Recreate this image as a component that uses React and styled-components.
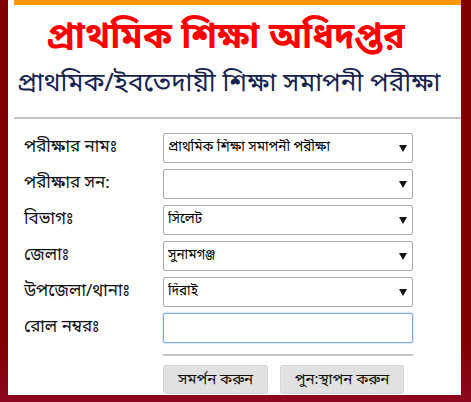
import React from 'react'
import styled, { createGlobalStyle } from 'styled-components'

const bn = `"Noto Sans Bengali", "Noto Serif Bengali", "Lohit Bengali", "Vrinda", "Liberation Sans", sans-serif`

const GlobalStyle = createGlobalStyle`
  html, body {
    margin: 0;
    padding: 0;
    background: #fff;
  }
  body {
    font-family: ${bn};
  }
`

const Page = styled.div`
  height: 402px;
  box-sizing: border-box;
  padding: 0 10px 7px 8px;
  background: linear-gradient(#7f0000 0%, #7f0000 85%, #8c0820 100%);
  display: flex;
`

const Panel = styled.main`
  flex: 1;
  background: #fff;
  display: flex;
  flex-direction: column;
`

const TopBar = styled.div`
  height: 5px;
  margin-left: 6px;
  background: #ff9900;
`

const Title = styled.h1`
  margin: 14px 0 0;
  padding-right: 18px;
  text-align: center;
  color: #ff0000;
  font-size: 36px;
  font-weight: bold;
  line-height: 40px;
`

const SubTitle = styled.h2`
  margin: 10px 0 0 9px;
  color: #17234f;
  font-size: 26px;
  font-weight: normal;
  line-height: 32px;
  white-space: nowrap;
`

const Rule = styled.hr`
  margin: ${p => p.$top || 0}px 0 0 ${p => p.$left || 0}px;
  width: ${p => (p.$width ? `${p.$width}px` : 'auto')};
  border: 0;
  border-top: 2px solid #c4c4c4;
`

const Form = styled.form`
  display: grid;
  grid-template-columns: 139px 250px;
  row-gap: 6px;
  padding: 14px 0 0 16px;
  align-items: center;
`

const Label = styled.label`
  font-size: 17px;
  color: #111;
  line-height: 20px;
  white-space: nowrap;
`

const SelectWrap = styled.div`
  position: relative;
  height: 30px;
`

const Select = styled.select`
  appearance: none;
  width: 100%;
  height: 100%;
  box-sizing: border-box;
  border: 1px solid #a9a9a9;
  border-radius: 2px;
  background: #fff;
  padding: 0 24px 0 4px;
  font-family: ${bn};
  font-size: 13.5px;
  color: #000;
`

const Arrow = styled.svg`
  position: absolute;
  right: 6px;
  top: 12px;
  pointer-events: none;
`

const Input = styled.input`
  width: 100%;
  height: 30px;
  box-sizing: border-box;
  border: 1px solid #7aa9e6;
  border-radius: 2px;
  box-shadow: 0 0 2px rgba(80, 140, 220, 0.6);
  outline: none;
  padding: 0 4px;
  font-size: 14px;
`

const Actions = styled.div`
  display: flex;
  gap: 12px;
  margin: 9px 0 0 155px;
`

const Button = styled.button`
  height: 29px;
  width: ${p => p.$width}px;
  border: 1px dotted #c9c9c9;
  border-radius: 3px;
  background: #e1e1e1;
  font-family: ${bn};
  font-size: 15px;
  color: #111;
  padding: 0;
`

const fields = [
  { label: 'পরীক্ষার নামঃ', value: 'প্রাথমিক শিক্ষা সমাপনী পরীক্ষা' },
  { label: 'পরীক্ষার সন:', value: '' },
  { label: 'বিভাগঃ', value: 'সিলেট' },
  { label: 'জেলাঃ', value: 'সুনামগঞ্জ' },
  { label: 'উপজেলা/থানাঃ', value: 'দিরাই' },
]

const Dropdown = ({ value }) => (
  <SelectWrap>
    <Select defaultValue={value}>
      <option value={value}>{value}</option>
    </Select>
    <Arrow width="8" height="7" viewBox="0 0 8 7">
      <path d="M0 0h8L4 7z" fill="#111" />
    </Arrow>
  </SelectWrap>
)

export default function App() {
  return (
    <>
      <GlobalStyle />
      <Page>
        <Panel>
          <TopBar />
          <Title>প্রাথমিক শিক্ষা অধিদপ্তর</Title>
          <SubTitle>প্রাথমিক/ইবতেদায়ী শিক্ষা সমাপনী পরীক্ষা</SubTitle>
          <Rule $top={16} $left={6} />
          <Form>
            {fields.map(f => (
              <React.Fragment key={f.label}>
                <Label>{f.label}</Label>
                <Dropdown value={f.value} />
              </React.Fragment>
            ))}
            <Label>রোল নম্বরঃ</Label>
            <Input type="text" />
          </Form>
          <Rule $top={11} $left={155} $width={250} />
          <Actions>
            <Button type="button" $width={105}>সমর্পন করুন</Button>
            <Button type="button" $width={124}>পুন:স্থাপন করুন</Button>
          </Actions>
        </Panel>
      </Page>
    </>
  )
}
